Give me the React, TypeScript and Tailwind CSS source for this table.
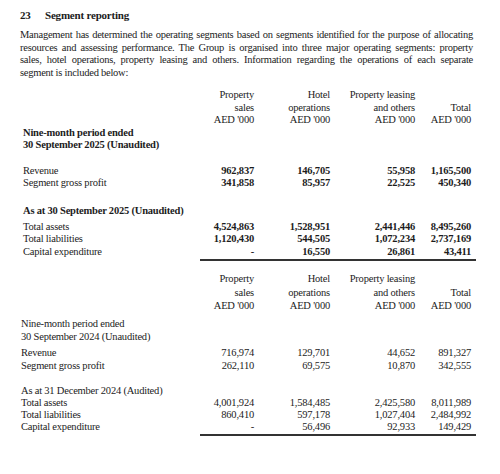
import React from "react";

type Col = [string, string, string];

const headers: Col[] = [
  ["Property", "sales", "AED '000"],
  ["Hotel", "operations", "AED '000"],
  ["Property leasing", "and others", "AED '000"],
  ["", "Total", "AED '000"],
];

const grid = "grid grid-cols-[180px_54px_76px_85px_56px]";

const paragraph = [
  "Management has determined the operating segments based on segments identified for the purpose of allocating",
  "resources and assessing performance. The Group is organised into three major operating segments: property",
  "sales, hotel operations, property leasing and others. Information regarding the operations of each separate",
];

const Header = ({ lh }: { lh: string }) => (
  <div className={`${grid} ${lh}`}>
    <div />
    {headers.map((h, i) => (
      <div key={i} className="flex flex-col items-end whitespace-nowrap">
        {h.map((line, j) => (
          <span key={j}>{line || "\u00a0"}</span>
        ))}
      </div>
    ))}
  </div>
);

const Row = ({
  label,
  values,
  bold,
  pl,
}: {
  label: string;
  values: string[];
  bold?: boolean;
  pl: string;
}) => (
  <div className={grid}>
    <div className={`${pl} whitespace-nowrap`}>{label}</div>
    {values.map((v, i) => (
      <div key={i} className={`text-right whitespace-nowrap ${bold ? "font-bold" : ""}`}>
        {v}
      </div>
    ))}
  </div>
);

export default function App() {
  return (
    <div
      className="w-[500px] h-[474px] bg-white text-[#1c1c1c] text-[10.5px] tracking-[-0.2px] leading-[12.5px] pl-[20px] pt-[9px] overflow-hidden"
      style={{ fontFamily: '"Liberation Serif", "DejaVu Serif", serif' }}
    >
      <div className="flex font-bold text-[11px] tracking-[-0.2px]">
        <span className="w-[25px]">23</span>
        <span>Segment reporting</span>
      </div>

      <div className="mt-[7.5px] w-[453px] tracking-[-0.25px]">
        {paragraph.map((line, i) => (
          <div key={i} className="text-justify [text-align-last:justify] whitespace-nowrap">
            {line}
          </div>
        ))}
        <div>segment is included below:</div>
      </div>

      {/* 2025 */}
      <div className="mt-[10px]">
        <Header lh="leading-[12.5px]" />
      </div>
      <div className="pl-[3px] font-bold">
        <div>Nine-month period ended</div>
        <div>30 September 2025 (Unaudited)</div>
      </div>
      <div className="mt-[13px]">
        <Row pl="pl-[3px]" label="Revenue" values={["962,837", "146,705", "55,958", "1,165,500"]} bold />
        <Row pl="pl-[3px]" label="Segment gross profit" values={["341,858", "85,957", "22,525", "450,340"]} bold />
      </div>
      <div className="mt-[15px] pl-[3px] font-bold">As at 30 September 2025 (Unaudited)</div>
      <div className="mt-[3.5px]">
        <Row pl="pl-[3px]" label="Total assets" values={["4,524,863", "1,528,951", "2,441,446", "8,495,260"]} bold />
        <Row pl="pl-[3px]" label="Total liabilities" values={["1,120,430", "544,505", "1,072,234", "2,737,169"]} bold />
        <Row pl="pl-[3px]" label="Capital expenditure" values={["-", "16,550", "26,861", "43,411"]} bold />
      </div>
      <div className="ml-[180px] w-[276px] mt-[1px] h-[2px] bg-[#333]" />

      {/* 2024 */}
      <div className="mt-[11px]">
        <Header lh="leading-[13.5px]" />
      </div>
      <div className="mt-[4.5px] pl-[1px] leading-[13px]">
        <div>Nine-month period ended</div>
        <div>30 September 2024 (Unaudited)</div>
      </div>
      <div className="mt-[4px]">
        <Row pl="pl-[1px]" label="Revenue" values={["716,974", "129,701", "44,652", "891,327"]} />
        <Row pl="pl-[1px]" label="Segment gross profit" values={["262,110", "69,575", "10,870", "342,555"]} />
      </div>
      <div className="mt-[13px] leading-[12px]">
        <div className="pl-[1px]">As at 31 December 2024 (Audited)</div>
        <Row pl="pl-[1px]" label="Total assets" values={["4,001,924", "1,584,485", "2,425,580", "8,011,989"]} />
        <Row pl="pl-[1px]" label="Total liabilities" values={["860,410", "597,178", "1,027,404", "2,484,992"]} />
        <Row pl="pl-[1px]" label="Capital expenditure" values={["-", "56,496", "92,933", "149,429"]} />
      </div>
      <div className="ml-[180px] w-[276px] mt-[1px] h-[2px] bg-[#333]" />
    </div>
  );
}
